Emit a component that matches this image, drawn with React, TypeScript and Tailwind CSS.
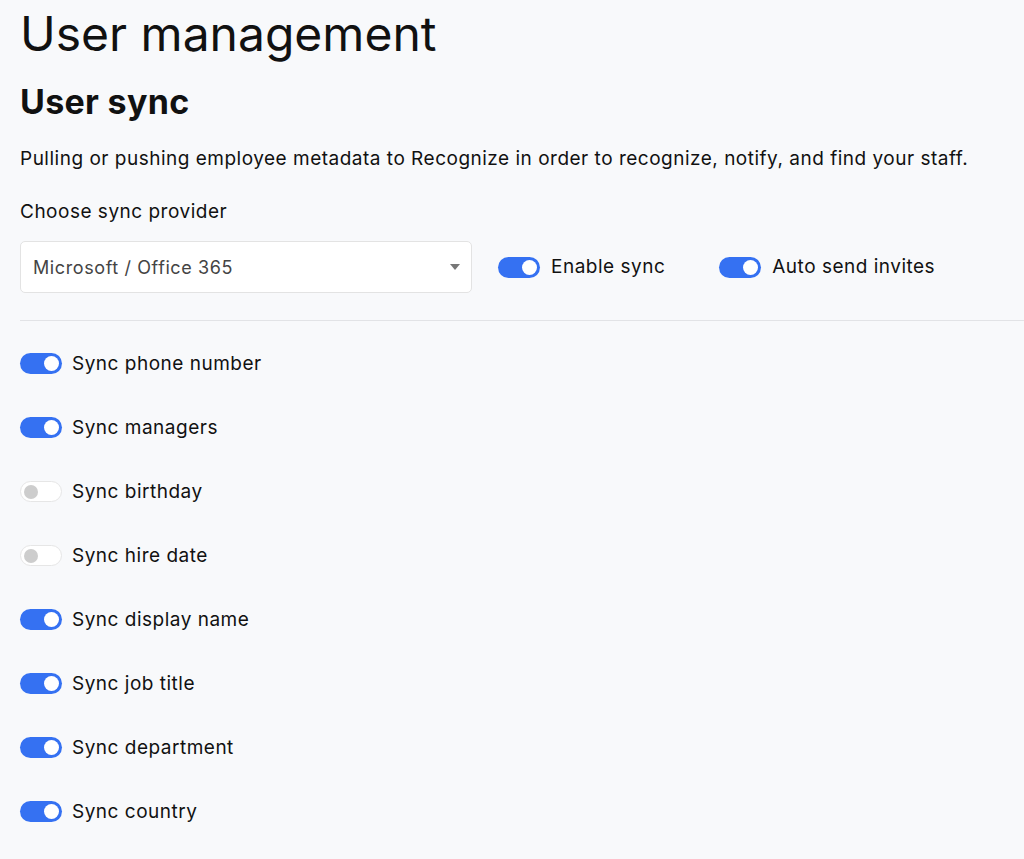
import React from "react";

function Toggle({ on }: { on: boolean }) {
  return on ? (
    <span className="relative inline-flex h-[21px] w-[42px] shrink-0 items-center rounded-full bg-[#3571f2]">
      <span className="absolute right-[3px] h-[15px] w-[15px] rounded-full bg-white" />
    </span>
  ) : (
    <span className="relative inline-flex h-[21px] w-[42px] shrink-0 items-center rounded-full border border-[#e6e6e6] bg-white">
      <span className="absolute left-[3px] h-[14px] w-[14px] rounded-full bg-[#cdcdcd]" />
    </span>
  );
}

const rows: [string, boolean][] = [
  ["Sync phone number", true],
  ["Sync managers", true],
  ["Sync birthday", false],
  ["Sync hire date", false],
  ["Sync display name", true],
  ["Sync job title", true],
  ["Sync department", true],
  ["Sync country", true],
];

export default function App() {
  return (
    <div
      className="min-h-[859px] w-full overflow-hidden bg-[#f8f9fb] text-[#111]"
      style={{ fontFamily: "Inter, 'Noto Sans', sans-serif" }}
    >
      <div className="pl-5">
        <h1 className="pt-[4px] text-[48px] leading-[60px] font-normal">User management</h1>
        <h2 className="mt-[18px] text-[34px] leading-[40px] font-bold tracking-[0.3px]">User sync</h2>
        <p className="mt-[24px] text-[19px] leading-[26px] tracking-[0.5px]">
          Pulling or pushing employee metadata to Recognize in order to recognize, notify, and find your staff.
        </p>
        <div className="mt-[27px] text-[19px] leading-[26px] tracking-[0.5px]">Choose sync provider</div>
        <div className="mt-[16px] flex items-center">
          <div className="flex h-[52px] w-[452px] items-center justify-between rounded-[5px] border border-[#e3e3e3] bg-white pl-[12px] pr-[11px]">
            <span className="text-[18px] tracking-[0.6px] text-[#444]">Microsoft / Office 365</span>
            <svg width="10" height="6" viewBox="0 0 10 6">
              <path d="M0 0h10L5 6z" fill="#777" />
            </svg>
          </div>
          <div className="ml-[26px] flex items-center gap-[11px]">
            <Toggle on />
            <span className="text-[19px] tracking-[0.5px]">Enable sync</span>
          </div>
          <div className="ml-[54px] flex items-center gap-[11px]">
            <Toggle on />
            <span className="text-[19px] tracking-[0.5px]">Auto send invites</span>
          </div>
        </div>
        <div className="mt-[27px] h-px bg-[#e2e3e6]" />
        <div className="mt-[32px] flex flex-col gap-[43px]">
          {rows.map(([label, on]) => (
            <div key={label} className="flex items-center gap-[10px]">
              <Toggle on={on} />
              <span className="text-[19px] leading-[21px] tracking-[0.5px]">{label}</span>
            </div>
          ))}
        </div>
      </div>
    </div>
  );
}
